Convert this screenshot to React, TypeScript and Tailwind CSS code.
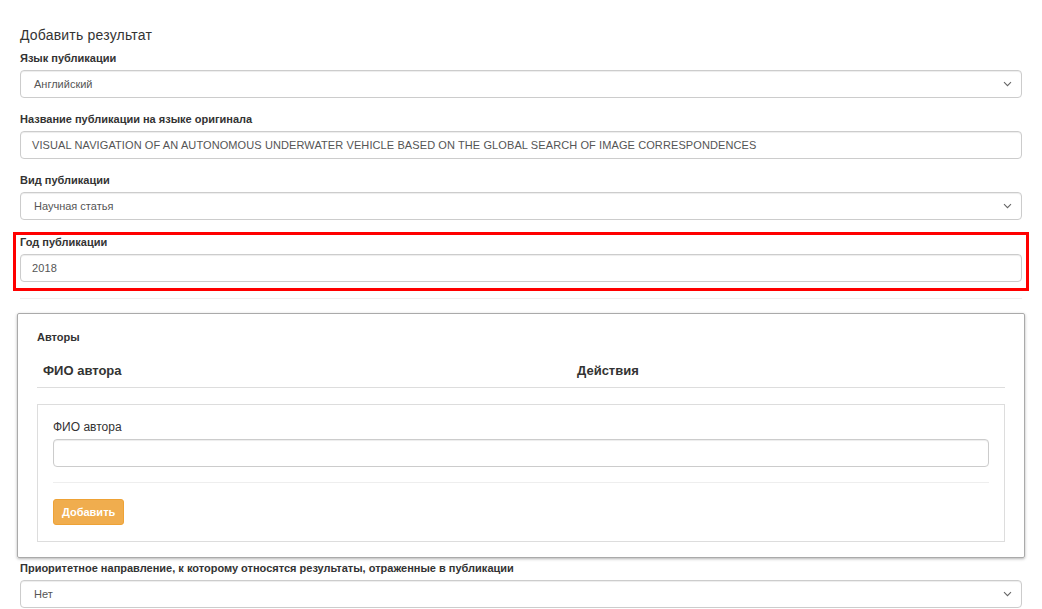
import React from "react";

const font = { fontFamily: '"Liberation Sans", Arial, sans-serif' };

const Chevron = () => (
  <svg width="9" height="6" viewBox="0 0 9 6" className="mr-[1px] shrink-0">
    <path d="M1 1.2l3.5 3.5 3.5-3.5" fill="none" stroke="#666" strokeWidth="1.1" />
  </svg>
);

function Field({ value, select }: { value?: string; select?: boolean }) {
  return (
    <div className="flex h-[28px] items-center justify-between rounded-[4px] border border-[#ccc] bg-white pl-[12px] pr-[8px] text-[11px] text-[#555] shadow-[inset_0_1px_1px_rgba(0,0,0,0.075)]">
      <span className={select ? "pl-[1px]" : "-ml-[1px] tracking-[0.1px]"}>{value}</span>
      {select && <Chevron />}
    </div>
  );
}

function Label({ children }: { children: React.ReactNode }) {
  return <div className="mb-[4px] text-[11px] font-bold leading-[15px] text-[#333]">{children}</div>;
}

export default function App() {
  return (
    <div style={font} className="min-h-[609px] bg-white px-[20px] pt-[25px] text-[#333]">
      <h3 className="text-[14px] leading-[20px] tracking-[0.2px] text-[#333]">Добавить результат</h3>

      <div className="mt-[6px]">
        <Label>Язык публикации</Label>
        <Field value="Английский" select />
      </div>

      <div className="mt-[14px]">
        <Label>Название публикации на языке оригинала</Label>
        <Field value="VISUAL NAVIGATION OF AN AUTONOMOUS UNDERWATER VEHICLE BASED ON THE GLOBAL SEARCH OF IMAGE CORRESPONDENCES" />
      </div>

      <div className="mt-[14px]">
        <Label>Вид публикации</Label>
        <Field value="Научная статья" select />
      </div>

      <div className="-mx-[7px] mt-[12px] border-[3px] border-[#f00] px-[4px] pb-[6px]">
        <Label>Год публикации</Label>
        <Field value="2018" />
      </div>

      <div className="mt-[7px] border-t border-[#eee]" />

      <div className="-mx-[3px] mt-[14px] rounded-[2px] border border-[#aaa] px-[19px] pb-[15px] pt-[16px] shadow-[0_1px_3px_rgba(0,0,0,0.3)]">
        <div className="text-[11px] font-bold leading-[15px]">Авторы</div>
        <div className="mt-[17px] flex border-b border-[#ddd] pb-[7px] text-[13px] font-bold leading-[18px]">
          <div className="w-[540px] pl-[6px]">ФИО автора</div>
          <div>Действия</div>
        </div>
        <div className="mt-[16px] border border-[#ddd] px-[15px] pb-[16px] pt-[15px]">
          <div className="mb-[4px] text-[12px] leading-[15px] text-[#333]">ФИО автора</div>
          <Field />
          <div className="mt-[15px] border-t border-[#eee]" />
          <button className="mt-[16px] h-[26px] rounded-[3px] border border-[#eea236] bg-[#f0ad4e] px-[8px] text-[11px] font-bold text-white">
            Добавить
          </button>
        </div>
      </div>

      <div className="mt-[3px]">
        <Label>Приоритетное направление, к которому относятся результаты, отраженные в публикации</Label>
        <Field value="Нет" select />
      </div>
    </div>
  );
}
